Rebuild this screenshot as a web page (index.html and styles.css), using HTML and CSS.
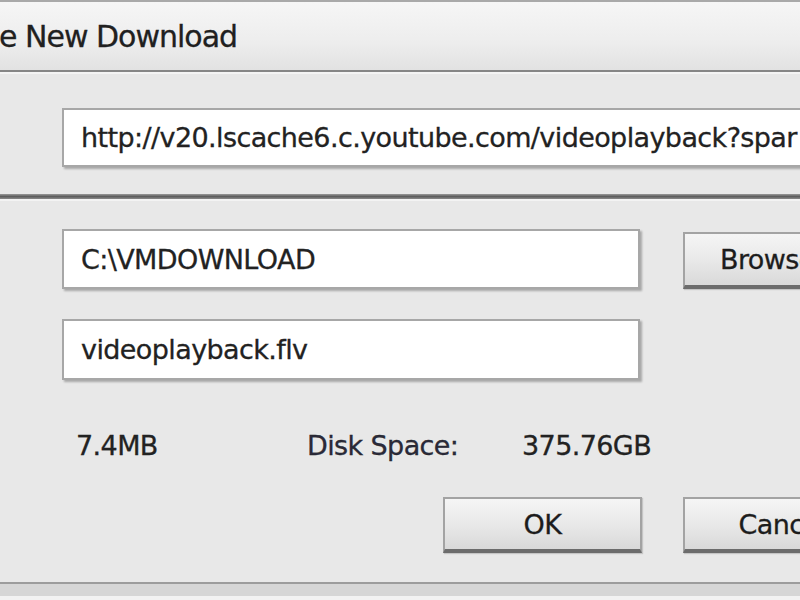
FILE: index.html
```html
<!DOCTYPE html>
<html>
<head>
<meta charset="utf-8">
<link rel="stylesheet" href="styles.css">
</head>
<body>
<div class="dialog">
  <div class="titlebar"><span class="title">e New Download</span></div>
  <div class="url-group">
    <div class="field url-field">http://v20.lscache6.c.youtube.com/videoplayback?spar</div>
  </div>
  <div class="sep"></div>
  <div class="form">
    <div class="field">C:\VMDOWNLOAD</div>
    <div class="btn btn-browse">Browse</div>
    <div class="field">videoplayback.flv</div>
    <div></div>
  </div>
  <div class="info">
    <span class="size">7.4MB</span>
    <span class="disk-label">Disk Space:</span>
    <span class="disk-val">375.76GB</span>
  </div>
  <div class="actions">
    <div class="btn">OK</div>
    <div class="btn">Cancel</div>
  </div>
  <div class="footer"></div>
</div>
</body>
</html>
```

FILE: styles.css
```css
html, body {
  margin: 0;
  padding: 0;
  background: #e8e8e8;
  overflow: hidden;
}
.dialog {
  width: 900px;
  height: 600px;
  font-family: "DejaVu Sans", sans-serif;
  font-size: 27px;
  letter-spacing: -0.6px;
  color: #222;
  -webkit-text-stroke: 0.3px #222;
  display: flex;
  flex-direction: column;
}
.titlebar {
  height: 68px;
  flex: none;
  border-top: 2px solid #a9a9a9;
  border-bottom: 2px solid #868686;
  background: linear-gradient(#f6f6f6, #ededed 60%, #e2e2e2);
  display: flex;
  align-items: center;
  box-shadow: 0 2px 0 #f4f4f4;
}
.title {
  font-size: 30px;
  letter-spacing: -1px;
  margin-left: -1px;
  color: #202020;
}
.url-group {
  padding: 36px 0 27px 62px;
}
.field {
  background: #fff;
  border: 2px solid #a7a7a7;
  box-shadow: 2px 2px 2px rgba(0, 0, 0, 0.28);
  display: flex;
  align-items: center;
  padding-left: 17px;
  box-sizing: border-box;
  white-space: nowrap;
  overflow: hidden;
}
.url-field {
  height: 59px;
  width: 840px;
}
.sep {
  height: 5px;
  flex: none;
  background: linear-gradient(#9a9a9a, #5e5e5e 50%, #8a8a8a);
  border-bottom: 2px solid #f3f3f3;
}
.form {
  padding: 28px 0 0 62px;
  display: grid;
  grid-template-columns: 578px 199px;
  grid-template-rows: 60px 61px;
  column-gap: 43px;
  row-gap: 30px;
}
.btn {
  height: 56px;
  box-sizing: border-box;
  border: 2px solid #a3a3a3;
  border-bottom: 4px solid #6c6c6c;
  background: linear-gradient(#f5f5f5, #e9e9e9 50%, #d9d9d9);
  display: flex;
  align-items: center;
  justify-content: center;
  color: #1c1c1c;
  box-shadow: 1px 1px 1px rgba(0, 0, 0, 0.15);
}
.btn-browse {
  margin-top: 3px;
  height: 57px;
  justify-content: flex-start;
  padding-left: 35px;
}
.info {
  margin-top: 50px;
  height: 30px;
  flex: none;
  padding-left: 76px;
  display: flex;
  align-items: center;
}
.size { width: 231px; }
.disk-label { width: 215px; color: #2a2a3a; }
.actions {
  margin-top: 37px;
  padding-left: 443px;
  display: flex;
  gap: 41px;
}
.actions .btn {
  width: 199px;
  flex: none;
}
.footer {
  margin-top: 29px;
  border-top: 2px solid #9c9c9c;
  border-bottom: 4px solid #f2f2f2;
  background: #d6d6d6;
  flex: 1;
}
```
